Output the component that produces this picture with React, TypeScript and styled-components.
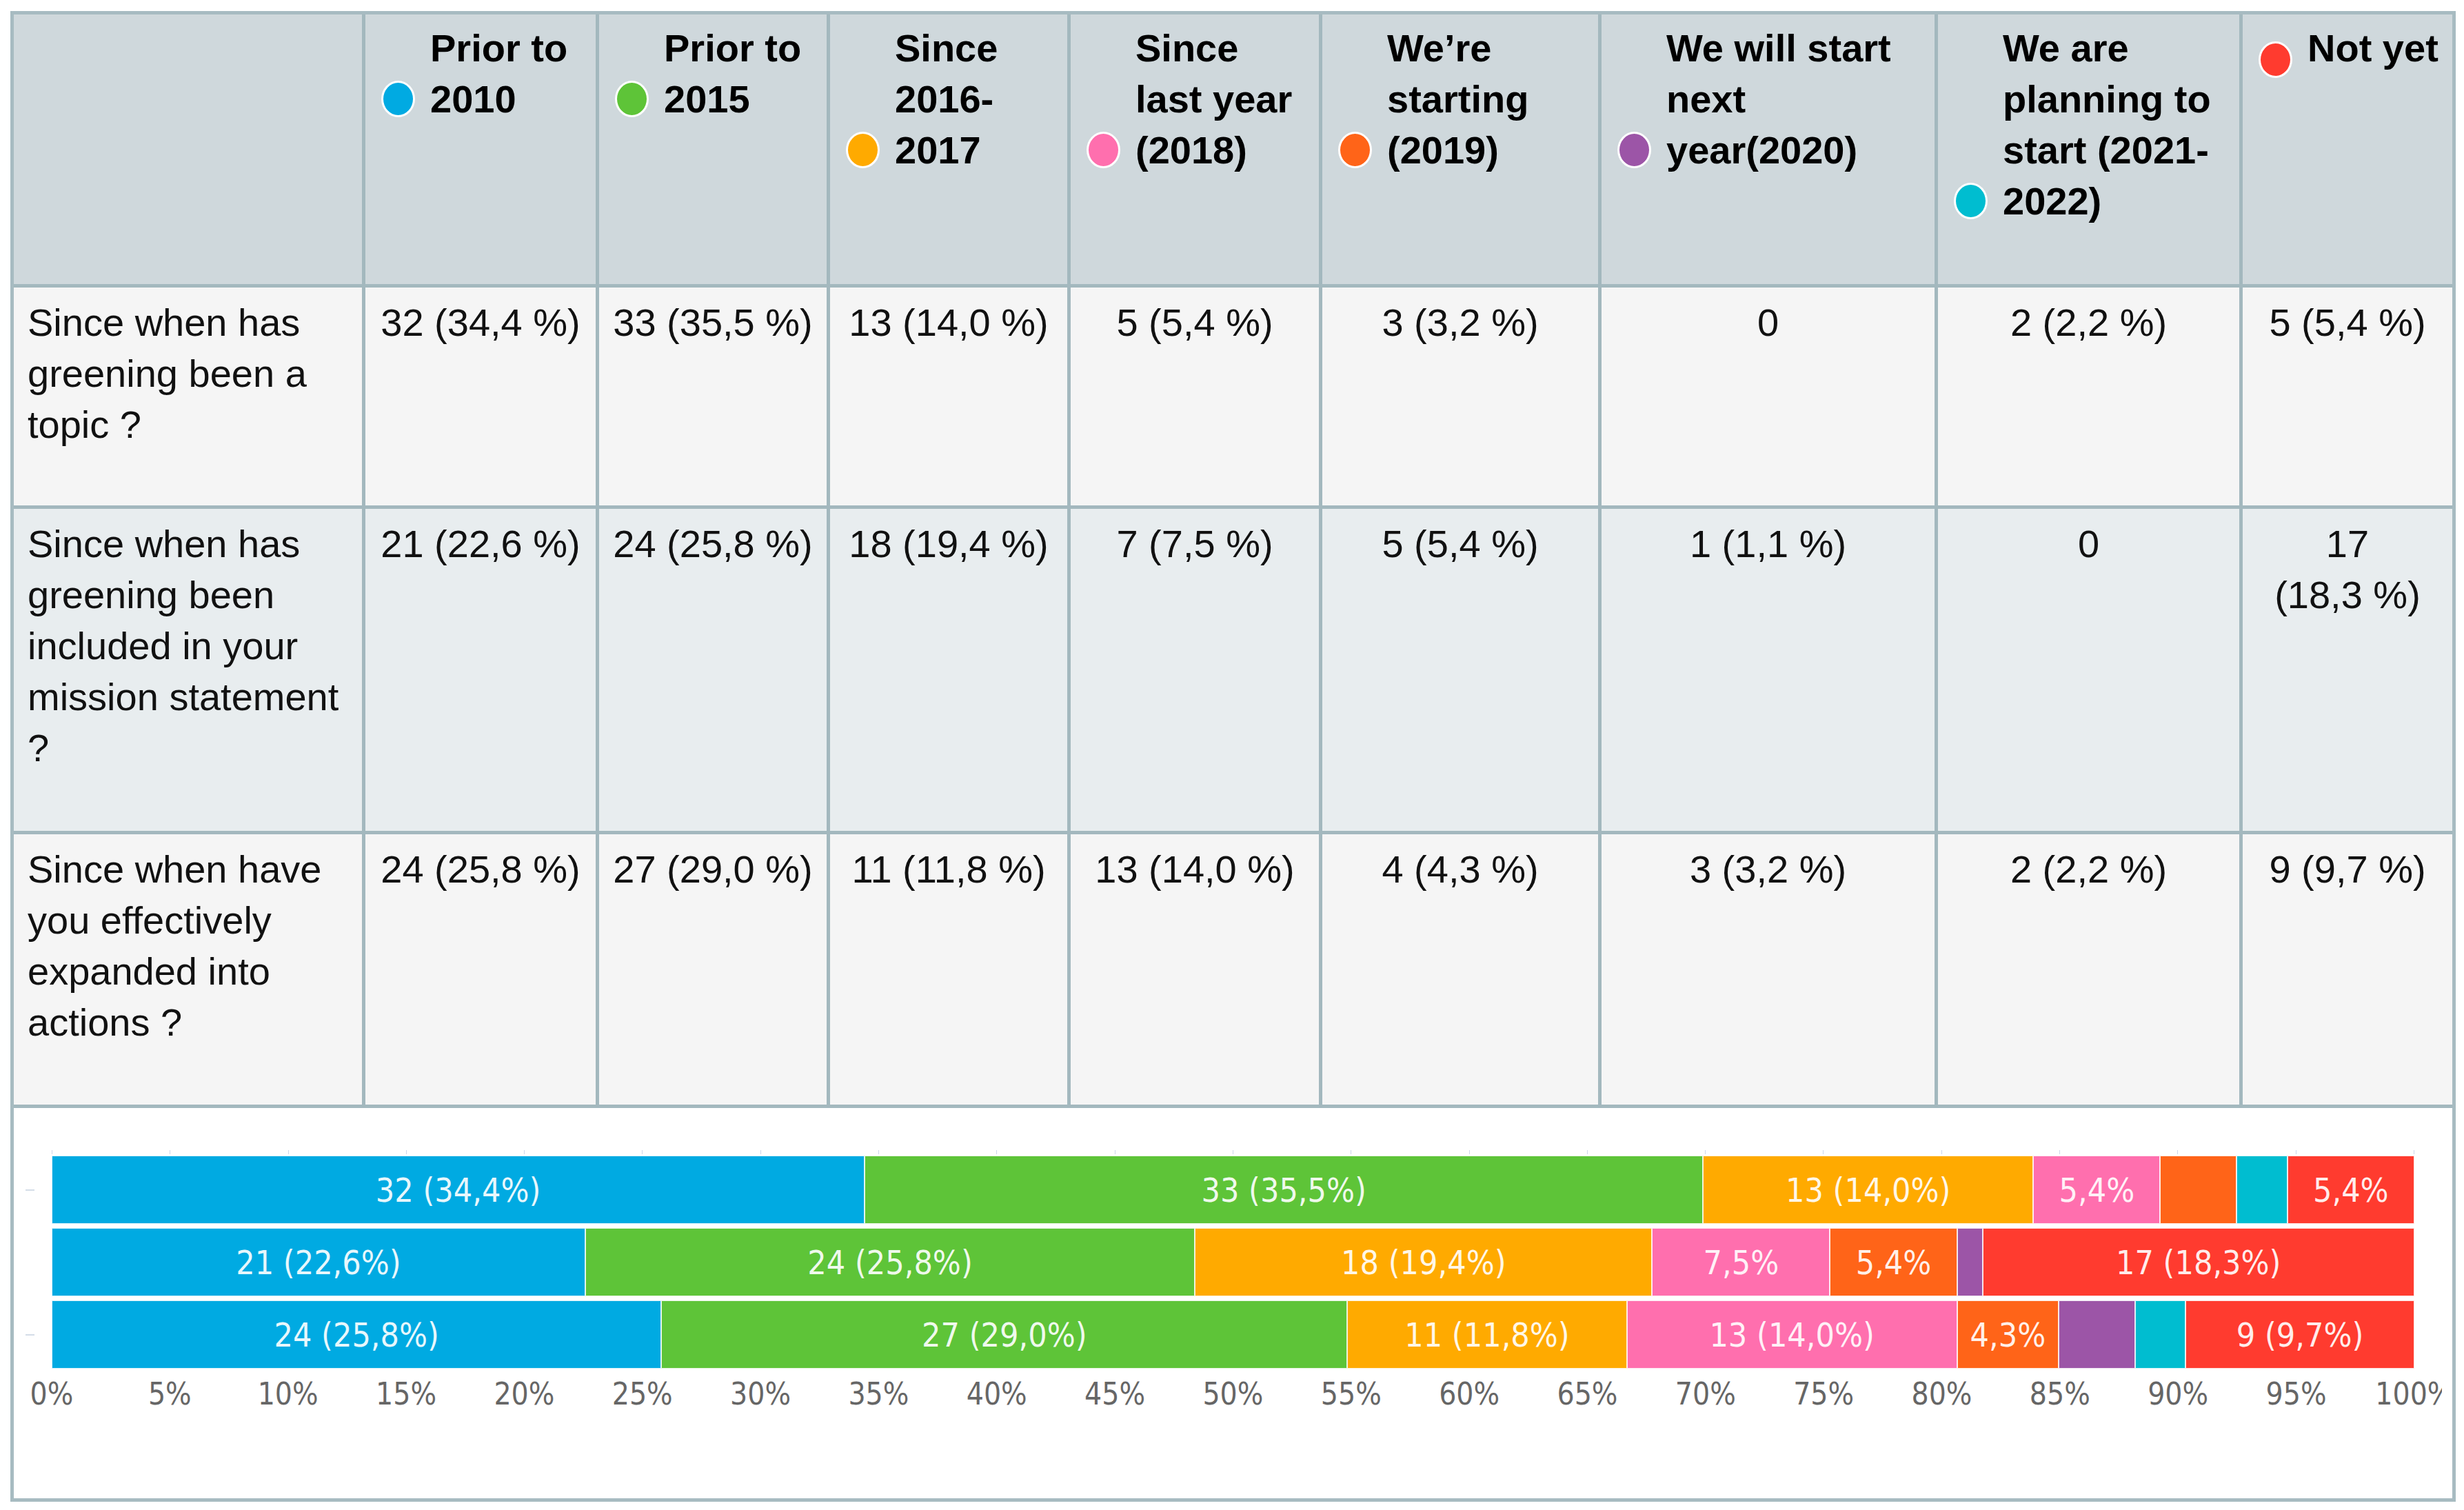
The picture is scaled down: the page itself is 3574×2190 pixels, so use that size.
import React from 'react';
import styled, { createGlobalStyle } from 'styled-components';

const GlobalStyle = createGlobalStyle`
  html, body {
    margin: 0;
    padding: 0;
    background: #ffffff;
  }
  body {
    font-family: "Liberation Sans", Arial, sans-serif;
  }
  * { box-sizing: border-box; }
`;

const C = {
  blue: '#00aae2',
  green: '#5ec438',
  amber: '#ffaa00',
  pink: '#ff6fae',
  orange: '#ff6418',
  purple: '#9c55a7',
  cyan: '#00bdd0',
  red: '#ff3b2f',
};

type Column = { label: string; color: string; drop?: number };

const columns: Column[] = [
  { label: 'Prior to 2010', color: C.blue },
  { label: 'Prior to 2015', color: C.green },
  { label: 'Since 2016-2017', color: C.amber },
  { label: 'Since last year (2018)', color: C.pink },
  { label: 'We\u2019re starting (2019)', color: C.orange },
  { label: 'We will start next year(2020)', color: C.purple },
  { label: 'We are planning to start (2021-2022)', color: C.cyan },
  { label: 'Not yet', color: C.red, drop: 17 },
];

const segColors = [C.blue, C.green, C.amber, C.pink, C.orange, C.purple, C.cyan, C.red];

type Row = { question: string; tone: 'light' | 'cool'; cells: string[]; counts: number[]; labels: string[] };

const NB = '\u00a0';

const rows: Row[] = [
  {
    question: 'Since when has greening been a topic ?',
    tone: 'light',
    cells: [`32 (34,4${NB}%)`, `33 (35,5${NB}%)`, `13 (14,0${NB}%)`, `5 (5,4${NB}%)`, `3 (3,2${NB}%)`, '0', `2 (2,2${NB}%)`, `5 (5,4${NB}%)`],
    counts: [32, 33, 13, 5, 3, 0, 2, 5],
    labels: ['32 (34,4%)', '33 (35,5%)', '13 (14,0%)', '5,4%', '', '', '', '5,4%'],
  },
  {
    question: 'Since when has greening been included in your mission statement ?',
    tone: 'cool',
    cells: [`21 (22,6${NB}%)`, `24 (25,8${NB}%)`, `18 (19,4${NB}%)`, `7 (7,5${NB}%)`, `5 (5,4${NB}%)`, `1 (1,1${NB}%)`, '0', `17 (18,3${NB}%)`],
    counts: [21, 24, 18, 7, 5, 1, 0, 17],
    labels: ['21 (22,6%)', '24 (25,8%)', '18 (19,4%)', '7,5%', '5,4%', '', '', '17 (18,3%)'],
  },
  {
    question: 'Since when have you effectively expanded into actions ?',
    tone: 'light',
    cells: [`24 (25,8${NB}%)`, `27 (29,0${NB}%)`, `11 (11,8${NB}%)`, `13 (14,0${NB}%)`, `4 (4,3${NB}%)`, `3 (3,2${NB}%)`, `2 (2,2${NB}%)`, `9 (9,7${NB}%)`],
    counts: [24, 27, 11, 13, 4, 3, 2, 9],
    labels: ['24 (25,8%)', '27 (29,0%)', '11 (11,8%)', '13 (14,0%)', '4,3%', '', '', '9 (9,7%)'],
  },
];

const yTicks = [true, false, true];
const axisSteps = Array.from({ length: 21 }, (_, i) => i * 5);

const PLOT_W = 3427;
const STEP = PLOT_W / 20;

/* ---------- frame & grid ---------- */

const Frame = styled.div`
  margin: 16px 0 0 15px;
  width: 3547px;
  border: 5px solid #a7bbc1;
`;

const Grid = styled.div`
  display: grid;
  grid-template-columns: 505px 334px 330px 344px 360px 400px 483px 437px 304px;
  grid-template-rows: 391px 316px 467px 392px 566px;
  gap: 5px;
  background: #a3b8be;
`;

/* ---------- header ---------- */

const CornerCell = styled.div`
  background: #cfd8dc;
`;

const HeadCell = styled.div`
  background: #cfd8dc;
  padding: 12px 10px 0 23px;
  display: flex;
  align-items: flex-start;
`;

const HeadContent = styled.div`
  display: flex;
  align-items: flex-end;
  gap: 22px;
  width: 100%;
`;

const Dot = styled.span<{ $color: string; $drop: number }>`
  flex: none;
  width: 49px;
  height: 53px;
  border-radius: 50%;
  background: ${p => p.$color};
  border: 3px solid #ffffff;
  margin-bottom: ${p => 11 - p.$drop}px;
`;

const HeadText = styled.span`
  flex: 1;
  min-width: 0;
  font-family: "Liberation Sans", Arial, sans-serif;
  font-weight: 700;
  font-size: 56px;
  line-height: 74px;
  color: #000000;
`;

/* ---------- body ---------- */

const QuestionCell = styled.div<{ $tone: 'light' | 'cool' }>`
  background: ${p => (p.$tone === 'cool' ? '#e8edef' : '#f5f5f5')};
  padding: 14px 22px 0 20px;
  font-family: "Liberation Sans", Arial, sans-serif;
  font-size: 56px;
  line-height: 74px;
  color: #111111;
`;

const ValueCell = styled.div<{ $tone: 'light' | 'cool' }>`
  background: ${p => (p.$tone === 'cool' ? '#e8edef' : '#f5f5f5')};
  padding: 14px 18px 0;
  text-align: center;
  font-family: "Liberation Sans", Arial, sans-serif;
  font-size: 56px;
  line-height: 74px;
  color: #111111;
`;

/* ---------- chart ---------- */

const ChartCell = styled.div`
  grid-column: 1 / -1;
  background: #ffffff;
  padding-top: 61px;
`;

const Canvas = styled.div`
  width: 3522px;
  overflow: hidden;
  padding: 0 0 24px 17px;
`;

const TickRow = styled.div`
  margin-left: 38px;
  width: ${PLOT_W}px;
  height: 8px;
  display: flex;
  justify-content: space-between;
`;

const Tick = styled.span`
  width: 1px;
  height: 6px;
  background: #ccd6eb;
`;

const BarStack = styled.div`
  display: flex;
  flex-direction: column;
  gap: 6px;
`;

const BarRow = styled.div`
  display: grid;
  grid-template-columns: 38px ${PLOT_W}px;
  align-items: center;
`;

const YTick = styled.span<{ $show: boolean }>`
  width: 13px;
  height: 2px;
  background: ${p => (p.$show ? '#d4dde8' : 'transparent')};
`;

const Bar = styled.div`
  display: flex;
  height: 99px;
`;

const Segment = styled.div<{ $color: string }>`
  height: 100%;
  background: ${p => p.$color};
  border: 1px solid rgba(255, 255, 255, 0.85);
  display: flex;
  align-items: center;
  justify-content: center;
  overflow: hidden;
  white-space: nowrap;
`;

const SegLabel = styled.span`
  font-family: "DejaVu Sans Condensed", "DejaVu Sans", sans-serif;
  font-stretch: condensed;
  font-size: 48px;
  line-height: 56px;
  color: rgba(255, 255, 255, 0.93);
`;

const AxisRow = styled.div`
  margin: 11px 0 0 ${38 - STEP / 2}px;
  display: grid;
  grid-template-columns: repeat(21, ${STEP}px);
`;

const AxisLabel = styled.span`
  text-align: center;
  white-space: nowrap;
  font-family: "DejaVu Sans Condensed", "DejaVu Sans", sans-serif;
  font-stretch: condensed;
  font-size: 44px;
  line-height: 52px;
  color: #666666;
`;

export default function App() {
  return (
    <>
      <GlobalStyle />
      <Frame>
        <Grid>
          <CornerCell />
          {columns.map(col => (
            <HeadCell key={col.label}>
              <HeadContent>
                <Dot $color={col.color} $drop={col.drop ?? 0} />
                <HeadText>{col.label}</HeadText>
              </HeadContent>
            </HeadCell>
          ))}

          {rows.map(row => (
            <React.Fragment key={row.question}>
              <QuestionCell $tone={row.tone}>{row.question}</QuestionCell>
              {row.cells.map((v, i) => (
                <ValueCell key={i} $tone={row.tone}>{v}</ValueCell>
              ))}
            </React.Fragment>
          ))}

          <ChartCell>
            <Canvas>
              <TickRow>
                {axisSteps.map(s => (
                  <Tick key={s} />
                ))}
              </TickRow>
              <BarStack>
                {rows.map((row, r) => {
                  const total = row.counts.reduce((a, b) => a + b, 0);
                  return (
                    <BarRow key={r}>
                      <YTick $show={yTicks[r]} />
                      <Bar>
                        {row.counts.map((n, i) =>
                          n > 0 ? (
                            <Segment key={i} $color={segColors[i]} style={{ width: `${(n / total) * 100}%` }}>
                              {row.labels[i] && <SegLabel>{row.labels[i]}</SegLabel>}
                            </Segment>
                          ) : null
                        )}
                      </Bar>
                    </BarRow>
                  );
                })}
              </BarStack>
              <AxisRow>
                {axisSteps.map(s => (
                  <AxisLabel key={s}>{`${s}%`}</AxisLabel>
                ))}
              </AxisRow>
            </Canvas>
          </ChartCell>
        </Grid>
      </Frame>
    </>
  );
}
